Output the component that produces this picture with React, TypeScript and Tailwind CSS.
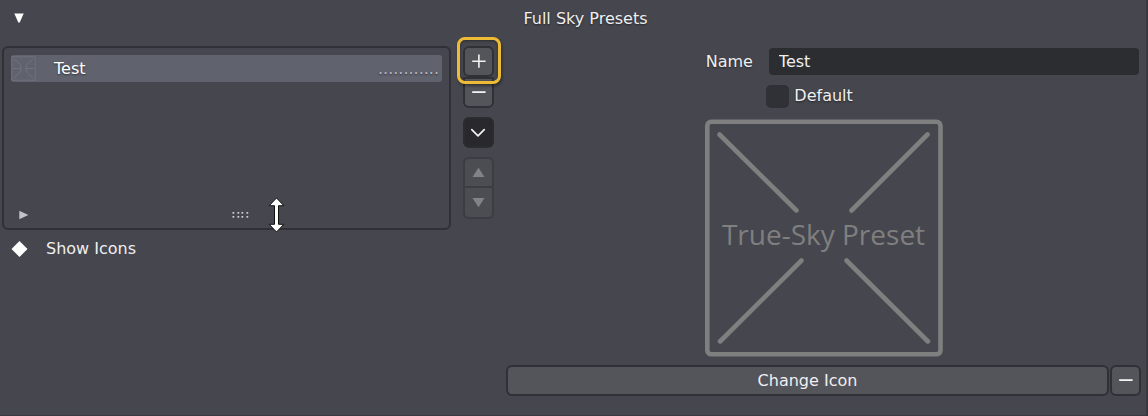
import { useState } from 'react';
import clsx from 'clsx';

interface ToolButtonProps {
  label: string;
  className?: string;
  disabled?: boolean;
  onClick?: () => void;
  children: React.ReactNode;
}

const ToolButton: React.FC<ToolButtonProps> = ({ label, className, disabled, onClick, children }) => (
  <button
    type="button"
    aria-label={label}
    disabled={disabled}
    onClick={onClick}
    className={clsx('flex h-[31px] w-[31px] shrink-0 items-center justify-center border-2', className)}
  >
    {children}
  </button>
);

const Plus = () => (
  <svg width="15" height="15" viewBox="0 0 15 15" stroke="#f2f2f2" strokeWidth="1.6">
    <path d="M7.9 0.6v13.2M1.2 7.2h13.4" />
  </svg>
);

const Minus = () => (
  <svg width="15" height="15" viewBox="0 0 15 15" stroke="#f2f2f2" strokeWidth="1.8">
    <path d="M1.2 7.1h13.4" />
  </svg>
);

const PresetFrame = () => (
  <svg className="block h-full w-full" viewBox="0 0 238 238" fill="none" stroke="#7f7f7f" strokeWidth="4.6" strokeLinecap="round">
    <rect x="2.3" y="2.8" width="233.2" height="232.4" rx="4" />
    <path d="M14.5 15.5 91.5 91.5M222.5 15.5 146.5 91.5M96.5 141.5 15 222.5M141.5 141.5 223 222.5" />
  </svg>
);

export default function App() {
  const [open, setOpen] = useState(true);
  const [name, setName] = useState('Test');
  const [isDefault, setIsDefault] = useState(false);

  return (
    <main className="min-h-screen overflow-hidden border-r-2 border-b border-r-[#38383e] border-b-[#3d373f] bg-[#46464e] pb-4 pl-0.5 pr-[5px] font-['DejaVu_Sans',sans-serif] text-base leading-6 text-[#efefef] [text-shadow:0_1px_2px_rgba(0,0,0,0.5)]">
      <header className="relative flex h-9 items-center justify-center">
        <button
          type="button"
          aria-label="Toggle panel"
          aria-expanded={open}
          onClick={() => setOpen(!open)}
          className="absolute left-[9px] flex h-4 w-4 items-center justify-center"
        >
          <svg width="10" height="10" viewBox="0 0 10 10" fill="#fff">
            <path d="M.3.5h9.400L5.700 9.500H4.300z" />
          </svg>
        </button>
        <h1 className="pl-7 pt-0.5">Full Sky Presets</h1>
      </header>

      {open && (
        <div className="grid grid-cols-[492fr_635fr] gap-3 pt-2.5">
          <section>
            <div className="flex gap-3">
              {/* Preset list */}
              <div className="flex h-[184px] min-w-0 flex-1 flex-col justify-between rounded-md border-2 border-[#303036] px-[7px] pb-[3px] pt-[7px]">
                <ul>
                  <li className="flex h-[27px] items-center rounded-[3px] bg-[#60626e] pr-[3px] text-white">
                    <svg className="mr-[18px] shrink-0" width="25" height="25" viewBox="0 0 25 25" fill="none" stroke="#6f717b" strokeWidth="1">
                      <rect x=".8" y=".8" width="23.4" height="23.4" />
                      <path d="m3 3 7 6M22 3l-7 6M10 15l-7 7M15 15l7 7M2 12.5h8M15 12.5h8M9 9q3 3.500 0 7M16 9q-3 3.500 0 7" />
                    </svg>
                    <span className="flex-1">Test</span>
                    <span className="text-[#b4b6be]">............</span>
                  </li>
                </ul>
                <div className="relative flex h-5 items-center justify-center pl-7">
                  <button type="button" aria-label="Show filters" className="absolute left-2">
                    <svg width="10" height="10" viewBox="0 0 10 10" fill="#c4c4c8">
                      <path d="M.3.8 9.3 5 .3 9.2z" />
                    </svg>
                  </button>
                  <svg width="17" height="8" viewBox="0 0 17 8" fill="#d0d0d4">
                    {[0, 5, 9, 14].map((x) => (
                      <g key={x}>
                        <rect x={x + 0.5} y="1" width="1.7" height="1.7" />
                        <rect x={x + 0.5} y="5" width="1.7" height="1.7" />
                      </g>
                    ))}
                  </svg>
                  {/* Resize cursor over the grip */}
                  <svg className="absolute -top-2 left-64" width="19" height="36" viewBox="0 0 19 36">
                    <path d="M9.5 1 16.800 8.700H11.500V27.300H16.800L9.500 35 2.200 27.300H7.500V8.700H2.200z" fill="#fff" stroke="#111" strokeWidth="1" />
                  </svg>
                </div>
              </div>

              <div className="flex flex-col">
                <div className="relative">
                  <ToolButton label="Add preset" className="rounded-md border-[#303036] bg-[#54545b]">
                    <Plus />
                  </ToolButton>
                  <ToolButton label="Remove preset" className="rounded-b-md border-[#303036] bg-[#54545b]">
                    <Minus />
                  </ToolButton>
                  <div className="pointer-events-none absolute -left-1.5 -top-[9px] h-[47px] w-11 rounded-lg border-3 border-[#edbb35] shadow-[1px_2px_3px_rgba(0,0,0,0.4),inset_0_1px_3px_rgba(0,0,0,0.4)]" />
                </div>
                <ToolButton label="Preset menu" className="mt-[9px] rounded-md border-[#2b2b30] bg-[#28282d]">
                  <svg width="15" height="15" viewBox="0 0 15 15" fill="none" stroke="#f2f2f2" strokeWidth="1.7" strokeLinecap="round" strokeLinejoin="round">
                    <path d="m.8 4.700 6.200 6.200 6.200-6.200" />
                  </svg>
                </ToolButton>
                <ToolButton label="Move up" disabled className="mt-[9px] rounded-t-md border-[#3c3c43] bg-[#4c4c53]">
                  <svg width="13" height="11" viewBox="0 0 13 11" fill="#828288">
                    <path d="M6.500.8 12.500 10H.5z" />
                  </svg>
                </ToolButton>
                <ToolButton label="Move down" disabled className="rounded-b-md border-t-0 border-[#3c3c43] bg-[#4c4c53]">
                  <svg width="13" height="11" viewBox="0 0 13 11" fill="#828288">
                    <path d="M.5 1h12L6.500 10.300z" />
                  </svg>
                </ToolButton>
              </div>
            </div>

            <button type="button" className="mt-[7px] flex items-center gap-[18px] pl-[9px]">
              <svg width="17" height="17" viewBox="0 0 17 17" fill="#fff">
                <path d="m8.500 0 8 8-8 8-8-8z" />
              </svg>
              Show Icons
            </button>
          </section>

          <section>
            <div className="mr-0.5 flex items-center gap-4 pt-0.5">
              <label htmlFor="preset-name" className="w-[39%] text-right">
                Name
              </label>
              <input
                id="preset-name"
                type="text"
                value={name}
                onChange={(e) => setName(e.target.value)}
                className="h-[27px] min-w-0 flex-1 rounded-[4px] bg-[#2c2d31] px-2.5 outline-none"
              />
            </div>
            <label className="mt-[9px] flex items-center gap-[5px] pl-[41%]">
              <input
                type="checkbox"
                checked={isDefault}
                onChange={(e) => setIsDefault(e.target.checked)}
                className="h-[23px] w-[23px] appearance-none rounded-[5px] bg-[#303136] checked:bg-[#5680c2]"
              />
              Default
            </label>

            <div className="relative mx-auto mt-[11px] h-[238px] w-[238px]">
              <PresetFrame />
              <p className="absolute inset-0 flex items-center justify-center whitespace-nowrap pb-2 font-['Open_Sans',sans-serif] text-[28px] text-[#7f7f7f] [text-shadow:none]">
                True-Sky Preset
              </p>
            </div>

            <div className="mt-2 flex gap-px">
              <button type="button" className="h-[31px] flex-1 rounded-md border-2 border-[#303036] bg-[#54545b]">
                Change Icon
              </button>
              <ToolButton label="Remove icon" className="rounded-md border-[#303036] bg-[#54545b]">
                <Minus />
              </ToolButton>
            </div>
          </section>
        </div>
      )}
    </main>
  );
}
